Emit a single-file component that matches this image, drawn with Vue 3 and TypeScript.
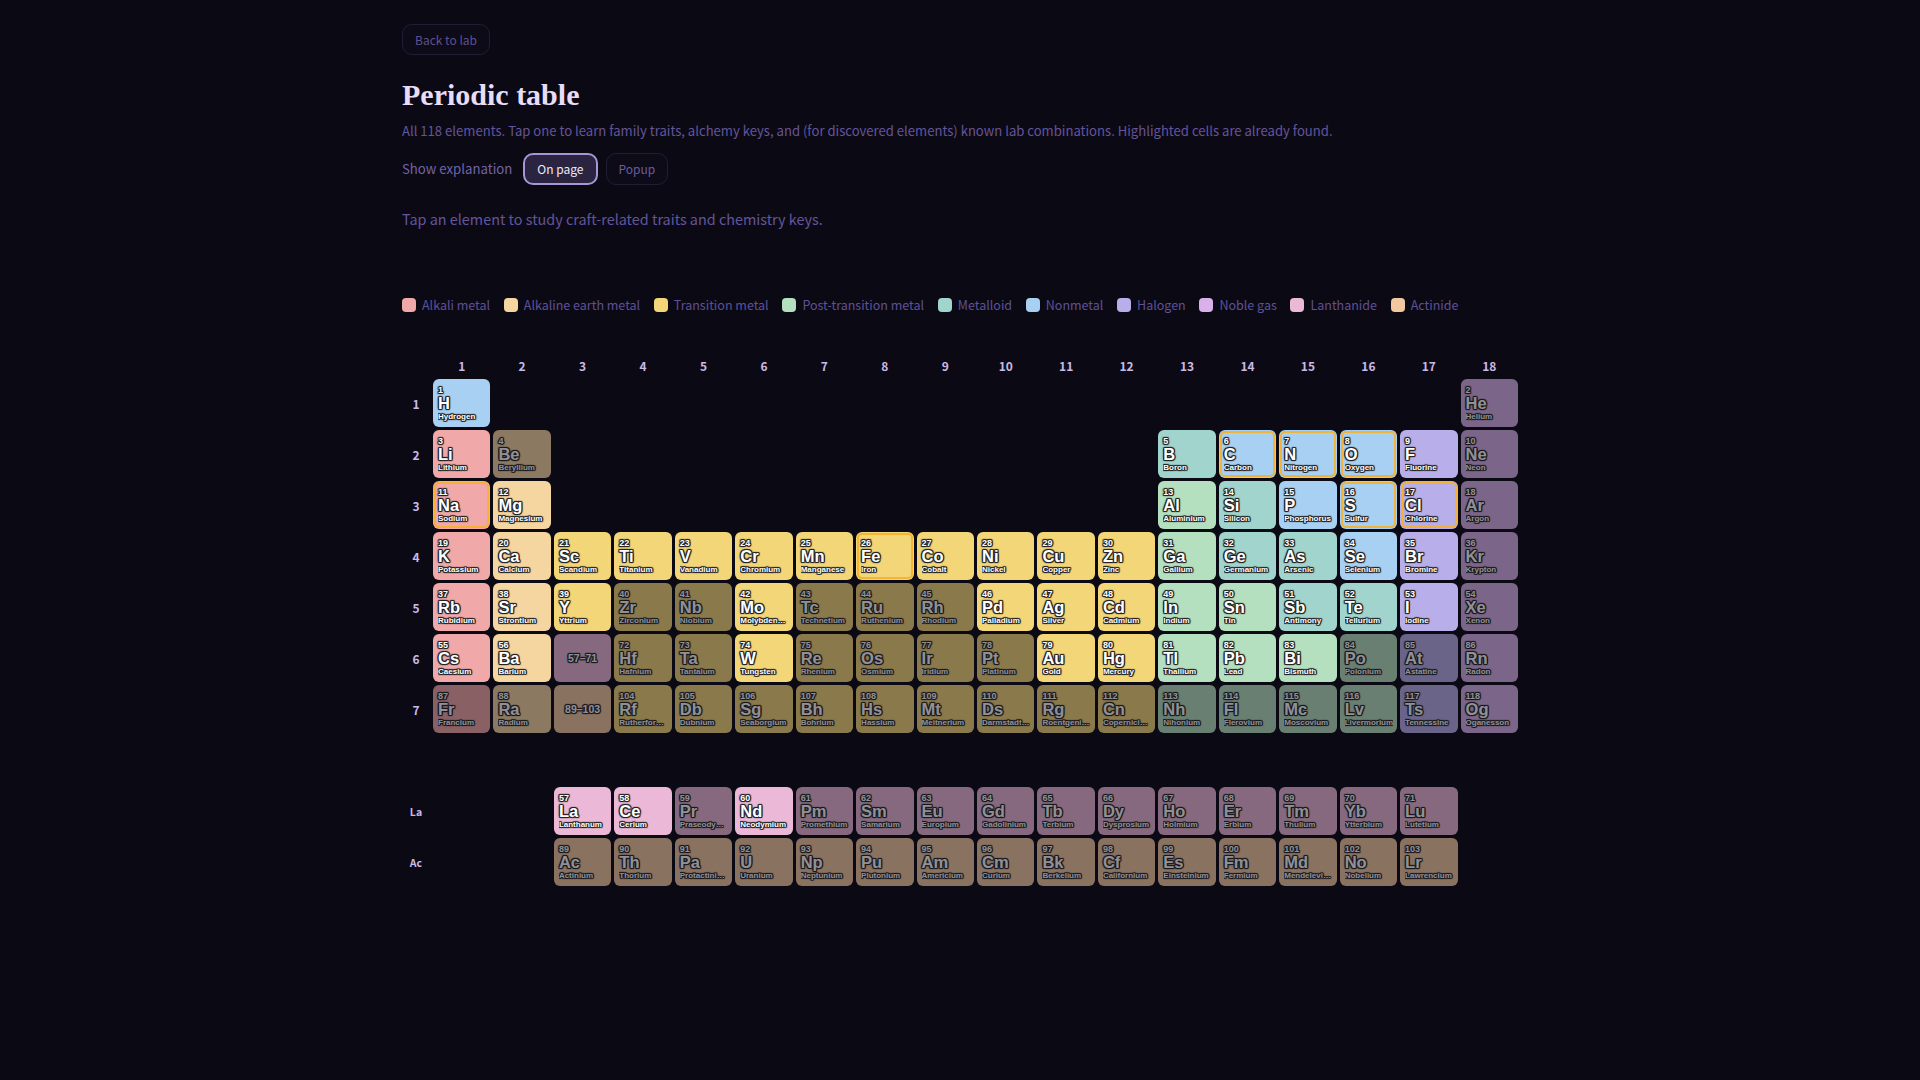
<script setup lang="ts">
const names = "H Hydrogen,He Helium,Li Lithium,Be Beryllium,B Boron,C Carbon,N Nitrogen,O Oxygen,F Fluorine,Ne Neon,Na Sodium,Mg Magnesium,Al Aluminium,Si Silicon,P Phosphorus,S Sulfur,Cl Chlorine,Ar Argon,K Potassium,Ca Calcium,Sc Scandium,Ti Titanium,V Vanadium,Cr Chromium,Mn Manganese,Fe Iron,Co Cobalt,Ni Nickel,Cu Copper,Zn Zinc,Ga Gallium,Ge Germanium,As Arsenic,Se Selenium,Br Bromine,Kr Krypton,Rb Rubidium,Sr Strontium,Y Yttrium,Zr Zirconium,Nb Niobium,Mo Molybdenum,Tc Technetium,Ru Ruthenium,Rh Rhodium,Pd Palladium,Ag Silver,Cd Cadmium,In Indium,Sn Tin,Sb Antimony,Te Tellurium,I Iodine,Xe Xenon,Cs Caesium,Ba Barium,La Lanthanum,Ce Cerium,Pr Praseodymium,Nd Neodymium,Pm Promethium,Sm Samarium,Eu Europium,Gd Gadolinium,Tb Terbium,Dy Dysprosium,Ho Holmium,Er Erbium,Tm Thulium,Yb Ytterbium,Lu Lutetium,Hf Hafnium,Ta Tantalum,W Tungsten,Re Rhenium,Os Osmium,Ir Iridium,Pt Platinum,Au Gold,Hg Mercury,Tl Thallium,Pb Lead,Bi Bismuth,Po Polonium,At Astatine,Rn Radon,Fr Francium,Ra Radium,Ac Actinium,Th Thorium,Pa Protactinium,U Uranium,Np Neptunium,Pu Plutonium,Am Americium,Cm Curium,Bk Berkelium,Cf Californium,Es Einsteinium,Fm Fermium,Md Mendelevium,No Nobelium,Lr Lawrencium,Rf Rutherfordium,Db Dubnium,Sg Seaborgium,Bh Bohrium,Hs Hassium,Mt Meitnerium,Ds Darmstadtium,Rg Roentgenium,Cn Copernicium,Nh Nihonium,Fl Flerovium,Mc Moscovium,Lv Livermorium,Ts Tennessine,Og Oganesson".split(",");

const legend = [
  { key: "alkali", label: "Alkali metal" },
  { key: "alkaline", label: "Alkaline earth metal" },
  { key: "transition", label: "Transition metal" },
  { key: "post", label: "Post-transition metal" },
  { key: "metalloid", label: "Metalloid" },
  { key: "nonmetal", label: "Nonmetal" },
  { key: "halogen", label: "Halogen" },
  { key: "noble", label: "Noble gas" },
  { key: "lanthanide", label: "Lanthanide" },
  { key: "actinide", label: "Actinide" },
];

const sets: Record<string, number[]> = {
  alkali: [3, 11, 19, 37, 55, 87],
  alkaline: [4, 12, 20, 38, 56, 88],
  post: [13, 31, 49, 50, 81, 82, 83, 84, 113, 114, 115, 116],
  metalloid: [5, 14, 32, 33, 51, 52],
  nonmetal: [1, 6, 7, 8, 15, 16, 34],
  halogen: [9, 17, 35, 53, 85, 117],
  noble: [2, 10, 18, 36, 54, 86, 118],
};

function category(z: number): string {
  if (z >= 57 && z <= 71) return "lanthanide";
  if (z >= 89 && z <= 103) return "actinide";
  for (const k in sets) if (sets[k].includes(z)) return k;
  return "transition";
}

const lit = new Set([1, 3, 5, 6, 7, 8, 9, 11, 12, 13, 14, 15, 16, 17, 19, 20, 21, 22, 23, 24, 25, 26, 27, 28, 29, 30, 31, 32, 33, 34, 35, 37, 38, 39, 42, 46, 47, 48, 49, 50, 51, 52, 53, 55, 56, 57, 58, 60, 74, 79, 80, 81, 82, 83]);
const found = new Set([6, 7, 8, 11, 16, 17, 26]);

function place(z: number): [number, number] {
  if (z === 1) return [1, 1];
  if (z === 2) return [18, 1];
  if (z <= 10) return [z <= 4 ? z - 2 : z + 8, 2];
  if (z <= 18) return [z <= 12 ? z - 10 : z, 3];
  if (z <= 36) return [z - 18, 4];
  if (z <= 54) return [z - 36, 5];
  if (z <= 56) return [z - 54, 6];
  if (z <= 71) return [z - 54, 9];
  if (z <= 86) return [z - 68, 6];
  if (z <= 88) return [z - 86, 7];
  if (z <= 103) return [z - 86, 10];
  return [z - 100, 7];
}

const elements = names.map((entry, i) => {
  const [symbol, name] = entry.split(" ");
  const z = i + 1;
  const [col, row] = place(z);
  return { z, symbol, name, col, row, cat: category(z), lit: lit.has(z), found: found.has(z) };
});

function cellPos(col: number, row: number) {
  return { gridColumn: col + 1, gridRow: row + 1 };
}

const groups = Array.from({ length: 18 }, (_, i) => i + 1);
const rowLabels = [
  { text: "1", row: 1 },
  { text: "2", row: 2 },
  { text: "3", row: 3 },
  { text: "4", row: 4 },
  { text: "5", row: 5 },
  { text: "6", row: 6 },
  { text: "7", row: 7 },
  { text: "La", row: 9, small: true },
  { text: "Ac", row: 10, small: true },
];
</script>

<template>
  <main class="page">
    <button class="chip back">Back to lab</button>
    <h1 class="title">Periodic table</h1>
    <p class="sub">All 118 elements. Tap one to learn family traits, alchemy keys, and (for discovered elements) known lab combinations. Highlighted cells are already found.</p>
    <div class="mode">
      <span class="mode-label">Show explanation</span>
      <button class="chip active">On page</button>
      <button class="chip">Popup</button>
    </div>
    <p class="hint">Tap an element to study craft-related traits and chemistry keys.</p>

    <ul class="legend">
      <li v-for="item in legend" :key="item.key" class="legend-item">
        <span class="swatch" :class="item.key"></span>{{ item.label }}
      </li>
    </ul>

    <div class="table">
      <span v-for="g in groups" :key="'g' + g" class="axis" :style="cellPos(g, 0)">{{ g }}</span>
      <span v-for="r in rowLabels" :key="'r' + r.text" class="axis" :class="{ small: r.small }" :style="cellPos(0, r.row)">{{ r.text }}</span>
      <button
        v-for="el in elements"
        :key="el.z"
        class="cell"
        :class="[el.cat, { dim: !el.lit, found: el.found }]"
        :style="cellPos(el.col, el.row)"
      >
        <span class="num">{{ el.z }}</span>
        <span class="sym">{{ el.symbol }}</span>
        <span class="name">{{ el.name }}</span>
      </button>
      <div class="cell range lanthanide dim" :style="cellPos(3, 6)">57–71</div>
      <div class="cell range actinide dim" :style="cellPos(3, 7)">89–103</div>
    </div>
  </main>
</template>

<style scoped>
.page {
  box-sizing: border-box;
  width: 1180px;
  min-height: 1080px;
  margin: 0 auto;
  padding: 24px 32px;
  font-family: "Noto Sans CJK JP", "Noto Sans", sans-serif;
  color: #5b4c8f;
}
button {
  font-family: inherit;
}
.chip {
  box-sizing: border-box;
  height: 32px;
  padding: 0 12px;
  border: 1px solid #221d35;
  border-radius: 10px;
  background: #0d0b17;
  color: #6a5ba0;
  font-size: 12px;
  line-height: 1;
}
.back {
  display: block;
  height: 31px;
  color: #5f5090;
}
.active {
  border: 2px solid #a696d6;
  background: #2a2440;
  color: #efe9fb;
}
.title {
  margin: 20px 0 0;
  height: 40px;
  font-family: "Liberation Serif", serif;
  font-weight: 700;
  font-size: 30px;
  line-height: 40px;
  color: #e8dcf8;
}
.sub {
  margin: 6px 0 0;
  font-size: 13.1px;
  line-height: 20px;
  color: #64549c;
}
.mode {
  display: flex;
  align-items: center;
  gap: 8px;
  margin-top: 12px;
}
.mode-label {
  margin-right: 3px;
  padding-bottom: 2px;
  font-size: 13.2px;
  color: #7263a8;
}
.hint {
  margin: 23px 0 0;
  font-size: 14.4px;
  line-height: 22px;
  color: #64549c;
}
.legend {
  display: flex;
  gap: 13.7px;
  margin: 65px 0 0;
  padding: 0;
  list-style: none;
}
.legend-item {
  display: flex;
  align-items: center;
  gap: 6px;
  font-size: 12.5px;
  line-height: 20px;
  white-space: nowrap;
  color: #5f5098;
}
.swatch {
  width: 14px;
  height: 14px;
  border-radius: 4px;
}
.table {
  display: grid;
  grid-template-columns: 28px repeat(18, minmax(0, 1fr));
  grid-template-rows: 22px repeat(7, 48px) 48px 48px 48px;
  gap: 3px;
  margin-top: 39px;
}
.axis {
  display: flex;
  align-items: center;
  justify-content: center;
  font-size: 12px;
  font-weight: 700;
  color: #c9b9e6;
}
.axis.small {
  font-size: 10.5px;
}
.cell {
  box-sizing: border-box;
  display: flex;
  flex-direction: column;
  align-items: stretch;
  min-width: 0;
  padding: 6px 4px 0 5px;
  border: 0;
  border-radius: 6px;
  font-family: "Liberation Sans", Arial, sans-serif;
  font-weight: 700;
  text-align: left;
  color: #fff;
  text-shadow: 1px 0 0 #232326, -1px 0 0 #232326, 0 1px 0 #232326, 0 -1px 0 #232326, 1px 1px 1px #232326, -1px -1px 1px #232326, 1px -1px 1px #232326, -1px 1px 1px #232326;
}
.cell.dim {
  opacity: 0.55;
}
.cell.found {
  outline: 2px solid rgba(247, 176, 40, 0.9);
  outline-offset: -3px;
}
.num {
  font-size: 9px;
  line-height: 10px;
}
.sym {
  font-size: 16.5px;
  line-height: 17px;
}
.name {
  font-size: 8px;
  line-height: 10px;
  white-space: nowrap;
  overflow: hidden;
  text-overflow: ellipsis;
}
.range {
  align-items: center;
  justify-content: center;
  padding: 0;
  font-size: 10.5px;
}
.alkali { background: #f0a8a8; }
.alkaline { background: #f5d5a0; }
.transition { background: #f2d678; }
.post { background: #b4e0c0; }
.metalloid { background: #a0d4cc; }
.nonmetal { background: #a8d0f2; }
.halogen { background: #b8aeea; }
.noble { background: #d8b0ea; }
.lanthanide { background: #ecb8d8; }
.actinide { background: #f2c8a0; }
</style>

<style>
html, body {
  background: #0b0a14;
}
</style>
